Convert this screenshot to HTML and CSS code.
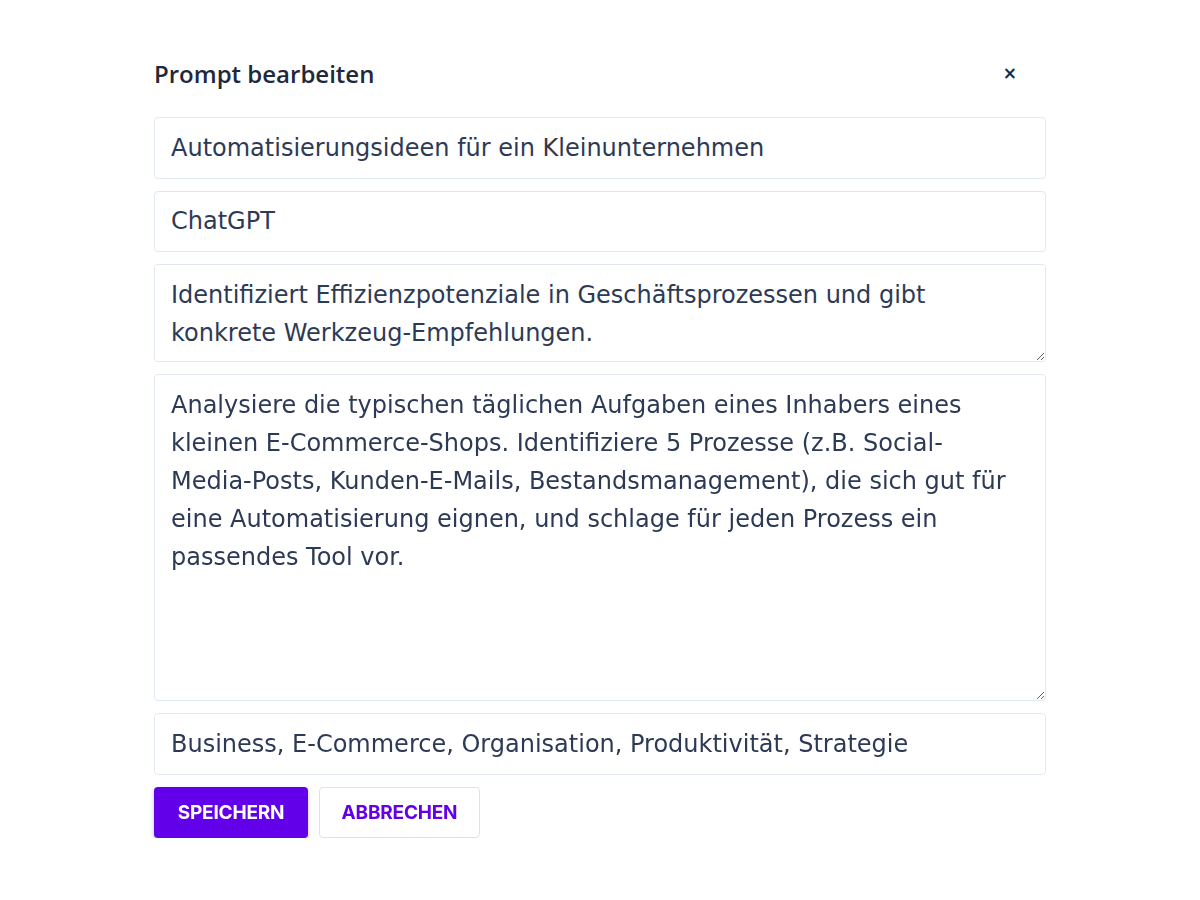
FILE: index.html
```html
<!DOCTYPE html>
<html lang="de">
<head>
<meta charset="utf-8">
<title>Prompt bearbeiten</title>
<link rel="stylesheet" href="styles.css">
</head>
<body>
<div class="modal">
  <div class="header">
    <h2 class="title">Prompt bearbeiten</h2>
    <button class="close" type="button" aria-label="Schließen">×</button>
  </div>
  <form class="form">
    <input class="field" type="text" value="Automatisierungsideen für ein Kleinunternehmen">
    <input class="field" type="text" value="ChatGPT">
    <textarea class="field area area-short">Identifiziert Effizienzpotenziale in Geschäftsprozessen und gibt konkrete Werkzeug-Empfehlungen.</textarea>
    <textarea class="field area area-long">Analysiere die typischen täglichen Aufgaben eines Inhabers eines kleinen E-Commerce-Shops. Identifiziere 5 Prozesse (z.B. Social-Media-Posts, Kunden-E-Mails, Bestandsmanagement), die sich gut für eine Automatisierung eignen, und schlage für jeden Prozess ein passendes Tool vor.</textarea>
    <input class="field" type="text" value="Business, E-Commerce, Organisation, Produktivität, Strategie">
    <div class="actions">
      <button class="btn btn-primary" type="button">Speichern</button>
      <button class="btn btn-secondary" type="button">Abbrechen</button>
    </div>
  </form>
</div>
</body>
</html>
```

FILE: styles.css
```css
html, body {
  margin: 0;
  padding: 0;
  background: #ffffff;
}

.modal {
  width: 892px;
  margin: 0 auto;
  padding-top: 55px;
}

.header {
  display: flex;
  align-items: center;
  justify-content: space-between;
  height: 36px;
  margin-bottom: 26px;
}

.title {
  margin: 0;
  font-family: "Open Sans", "Noto Sans", sans-serif;
  font-weight: 600;
  font-size: 24px;
  color: #1e293b;
}

.close {
  border: none;
  background: none;
  padding: 0;
  margin-right: 29px;
  font-family: "DejaVu Sans", sans-serif;
  font-weight: 700;
  font-size: 17px;
  color: #1e293b;
  cursor: pointer;
}

.form {
  display: flex;
  flex-direction: column;
  gap: 12px;
  margin: 0;
}

.field {
  box-sizing: border-box;
  width: 100%;
  margin: 0;
  padding: 10.5px 16px;
  border: 1px solid #e2e8f0;
  border-radius: 4px;
  background: #ffffff;
  font-family: "DejaVu Sans", sans-serif;
  font-size: 24px;
  line-height: 38px;
  color: #2d3a55;
  outline: none;
  display: block;
}

input.field {
  height: 61.5px;
}

.area {
  padding-right: 26px;
  resize: vertical;
}

.area-short {
  height: 98px;
}

.area-long {
  height: 327px;
}

.actions {
  display: flex;
  gap: 11px;
}

.btn {
  box-sizing: border-box;
  height: 51px;
  border-radius: 4px;
  font-family: "Inter", "Roboto", sans-serif;
  font-weight: 700;
  font-size: 19px;
  letter-spacing: -0.2px;
  text-transform: uppercase;
  cursor: pointer;
}

.btn-primary {
  width: 154px;
  background: #6200ea;
  color: #ffffff;
  border: none;
  box-shadow: 0 2px 4px rgba(0, 0, 0, 0.25);
}

.btn-secondary {
  width: 161px;
  background: #ffffff;
  color: #6200ea;
  border: 1px solid #e2e2e2;
}
```
